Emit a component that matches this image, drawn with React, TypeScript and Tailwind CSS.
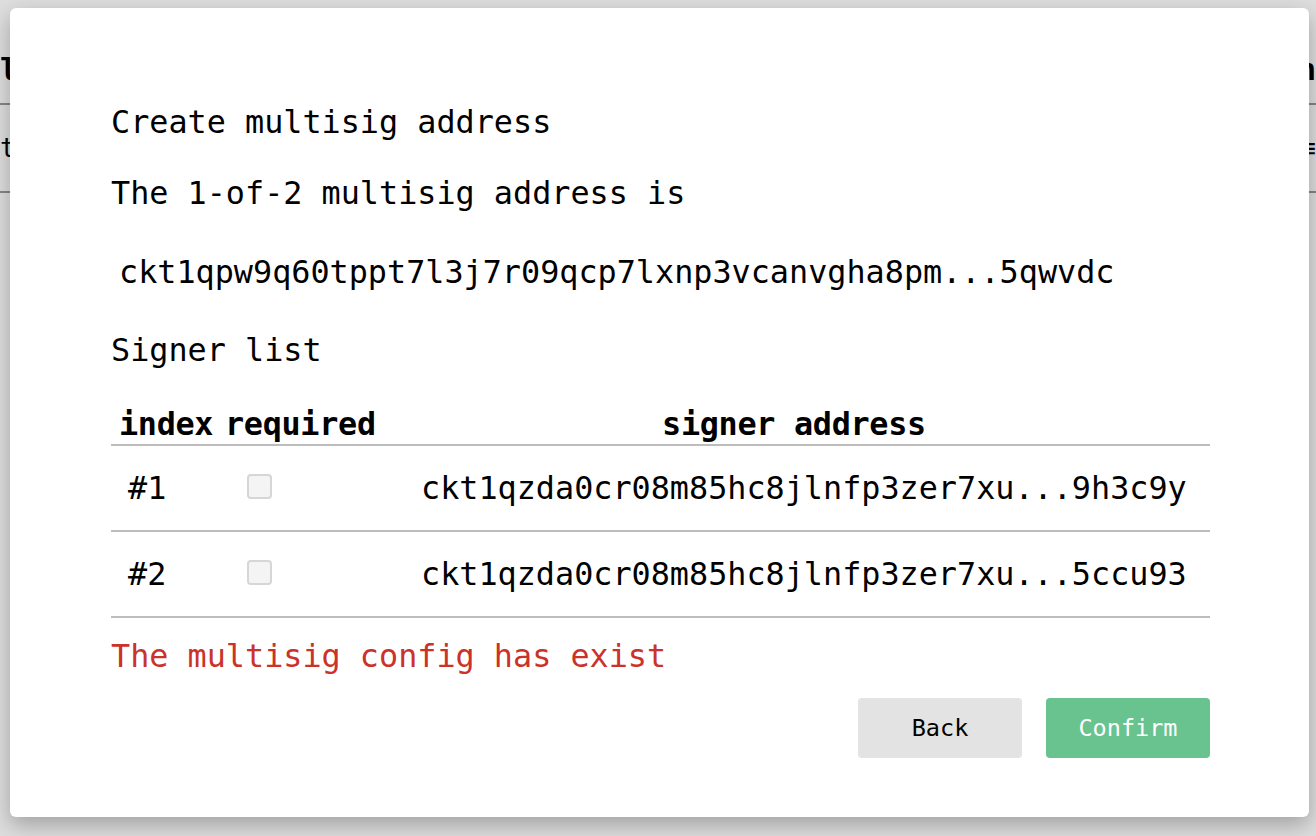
import React from "react";

const mono = "font-['DejaVu_Sans_Mono',monospace]";

function Checkbox() {
  return <div className="w-[25px] h-[25px] rounded-[4px] border-2 border-[#d6d6d6] bg-[#f4f4f4]" />;
}

const rows = [
  { idx: "#1", addr: "ckt1qzda0cr08m85hc8jlnfp3zer7xu...9h3c9y" },
  { idx: "#2", addr: "ckt1qzda0cr08m85hc8jlnfp3zer7xu...5ccu93" },
];

export default function App() {
  return (
    <div className="relative w-[1316px] h-[836px] overflow-hidden bg-white">
      {/* underlying page */}
      <div className={`flex flex-col ${mono}`}>
        <div className="h-[105px] border-b-2 border-[#9a9a9a] flex items-center justify-between pt-[36px]">
          <div className="text-[30px] font-bold text-black whitespace-nowrap leading-none">ld</div>
          <div className="text-[30px] font-bold text-black whitespace-nowrap leading-none">mn</div>
        </div>
        <div className="h-[88px] border-b-2 border-[#9a9a9a] flex items-center justify-between">
          <div className="text-[26px] text-black whitespace-nowrap leading-none">ta</div>
          <div className="text-[26px] text-black whitespace-nowrap leading-none">≡</div>
        </div>
      </div>
      {/* overlay */}
      <div className="absolute inset-0 bg-[rgba(0,0,0,0.13)]" />
      {/* dialog */}
      <div className={`absolute left-[10px] top-[8px] w-[1299px] h-[809px] bg-white rounded-[6px] shadow-[0_8px_22px_rgba(0,0,0,0.28)] pl-[101px] pr-[99px] pt-[95px] text-black ${mono} text-[31.8px] leading-[38px] flex flex-col`}>
        <div>Create multisig address</div>
        <div className="mt-[33px]">The 1-of-2 multisig address is</div>
        <div className="mt-[41px] pl-2">ckt1qpw9q60tppt7l3j7r09qcp7lxnp3vcanvgha8pm...5qwvdc</div>
        <div className="mt-[40px]">Signer list</div>
        <div className="mt-[36px] flex flex-col">
          <div className="grid grid-cols-[106px_169px_1fr] h-[41px] border-b-2 border-[#bdbdbd] font-bold items-center pb-[2px] tracking-[-0.3px]">
            <div className="pl-2">index</div>
            <div className="pl-2">required</div>
            <div className="text-center pr-2">signer address</div>
          </div>
          {rows.map((r) => (
            <div key={r.idx} className="grid grid-cols-[107px_169px_1fr] h-[86px] border-b-2 border-[#bdbdbd] items-center">
              <div className="pl-[17px]">{r.idx}</div>
              <div className="pl-[29px] pb-[4px]"><Checkbox /></div>
              <div className="pl-[34px] whitespace-nowrap">{r.addr}</div>
            </div>
          ))}
        </div>
        <div className="mt-[19px] text-[#cb3229]">The multisig config has exist</div>
        <div className="mt-[23px] flex justify-end gap-[24px]">
          <button className="w-[164px] h-[60px] rounded-[4px] bg-[#e3e3e3] text-[23.5px] text-black">Back</button>
          <button className="w-[164px] h-[60px] rounded-[4px] bg-[#69c38f] text-[23.5px] text-white">Confirm</button>
        </div>
      </div>
    </div>
  );
}
